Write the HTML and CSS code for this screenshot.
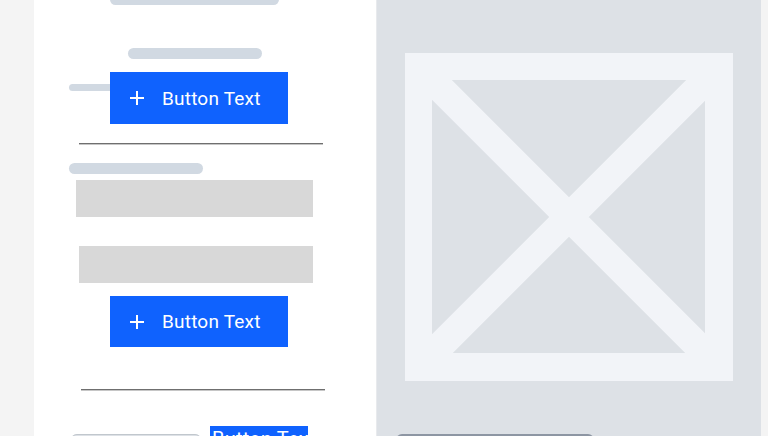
FILE: index.html
```html
<!DOCTYPE html>
<html lang="en">
<head>
  <meta charset="UTF-8">
  <title>Layout Preview</title>
  <link rel="stylesheet" href="styles.css">
</head>
<body>
  <div class="page">
    <section class="card">
      <div class="skel skel-a"></div>
      <div class="skel skel-b"></div>
      <div class="skel skel-c"></div>
      <button class="btn btn-lg btn-first">
        <svg class="plus" width="14" height="14" viewBox="0 0 14 14"><path d="M7 0v14M0 7h14" stroke="#fff" stroke-width="2"/></svg>
        <span>Button Text</span>
      </button>
      <div class="rule rule-1"></div>
      <div class="skel skel-d"></div>
      <div class="field field-1"></div>
      <div class="field field-2"></div>
      <button class="btn btn-lg btn-second">
        <svg class="plus" width="14" height="14" viewBox="0 0 14 14"><path d="M7 0v14M0 7h14" stroke="#fff" stroke-width="2"/></svg>
        <span>Button Text</span>
      </button>
      <div class="rule rule-2"></div>
      <div class="footer-row">
        <div class="skel skel-e"></div>
        <button class="btn btn-sm">Button Text</button>
      </div>
    </section>

    <section class="media">
      <svg class="placeholder" width="328" height="328" viewBox="0 0 328 328">
        <defs>
          <clipPath id="inner"><rect x="27" y="27" width="273" height="273"/></clipPath>
        </defs>
        <rect width="328" height="328" fill="#f2f4f8"/>
        <rect x="27" y="27" width="273" height="273" fill="#dde1e6"/>
        <g clip-path="url(#inner)" stroke="#f2f4f8" stroke-width="28">
          <path d="M20 20L308 308M308 20L20 308"/>
        </g>
      </svg>
      <div class="media-bar"></div>
    </section>
  </div>
</body>
</html>
```

FILE: styles.css
```css
html, body {
  margin: 0;
  height: 100%;
  overflow: hidden;
}

body {
  font-family: Roboto, 'Liberation Sans', sans-serif;
  background-color: #f4f4f4;
}

.page {
  display: flex;
  padding-left: 34px;
  height: 436px;
  overflow: hidden;
}

/* left column */
.card {
  width: 342px;
  background-color: #fff;
  display: flex;
  flex-direction: column;
  align-items: flex-start;
}

.skel {
  background-color: #d1d9e2;
  border-radius: 6px;
  flex-shrink: 0;
}

.skel-a {
  margin: -6px 0 0 76px;
  width: 169px;
  height: 11px;
}

.skel-b {
  margin: 43px 0 0 94px;
  width: 134px;
  height: 11px;
}

.skel-c {
  margin: 25px 0 0 35px;
  width: 110px;
  height: 7px;
  border-radius: 4px;
}

.skel-d {
  margin: 19px 0 0 35px;
  width: 134px;
  height: 11px;
}

.btn {
  font-family: Roboto, 'Liberation Sans', sans-serif;
  font-weight: 400;
  letter-spacing: 0.2px;
  border: none;
  border-radius: 0;
  background-color: #0f62fe;
  color: #fff;
  cursor: pointer;
  flex-shrink: 0;
}

.btn-lg {
  display: flex;
  align-items: center;
  gap: 18px;
  width: 178px;
  height: 52px;
  padding: 0 0 0 20px;
  margin-left: 76px;
  font-size: 19px;
}

.btn-first {
  margin-top: -19px;
  position: relative;
}

.btn-second {
  margin-top: 13px;
  height: 51px;
}

.rule {
  height: 1px;
  width: 244px;
  background-color: #6f6f6f;
  box-shadow: 0 1px 0 #c6c6c6;
  flex-shrink: 0;
}

.rule-1 {
  margin: 19px 0 0 45px;
}

.rule-2 {
  margin: 42px 0 0 47px;
}

.field {
  background-color: #d8d8d8;
  height: 37px;
  flex-shrink: 0;
}

.field-1 {
  margin: 6px 0 0 42px;
  width: 237px;
}

.field-2 {
  margin: 29px 0 0 45px;
  width: 234px;
}

.footer-row {
  display: flex;
  align-items: flex-start;
  gap: 9px;
  margin: 36px 0 0 37px;
}

.skel-e {
  margin-top: 8px;
  width: 130px;
  height: 12px;
  background-color: #dde1e6;
  box-shadow: inset 0 1px 0 #c1c7cd;
}

.btn-sm {
  width: 98px;
  padding: 2px 0 20px 2px;
  font-size: 20px;
  line-height: 23px;
  text-align: left;
  white-space: nowrap;
  overflow: hidden;
}

/* right column */
.media {
  width: 384px;
  border-left: 1px solid #e8eaed;
  background-color: #dde1e6;
  display: flex;
  flex-direction: column;
  align-items: flex-start;
}

.placeholder {
  display: block;
  margin: 53px 0 0 28px;
  flex-shrink: 0;
}

.media-bar {
  margin: 53px 0 0 19px;
  width: 198px;
  height: 12px;
  border-radius: 6px 6px 0 0;
  background-color: #c1c7cd;
  border-top: 2px solid #8d96a3;
  flex-shrink: 0;
}
```
